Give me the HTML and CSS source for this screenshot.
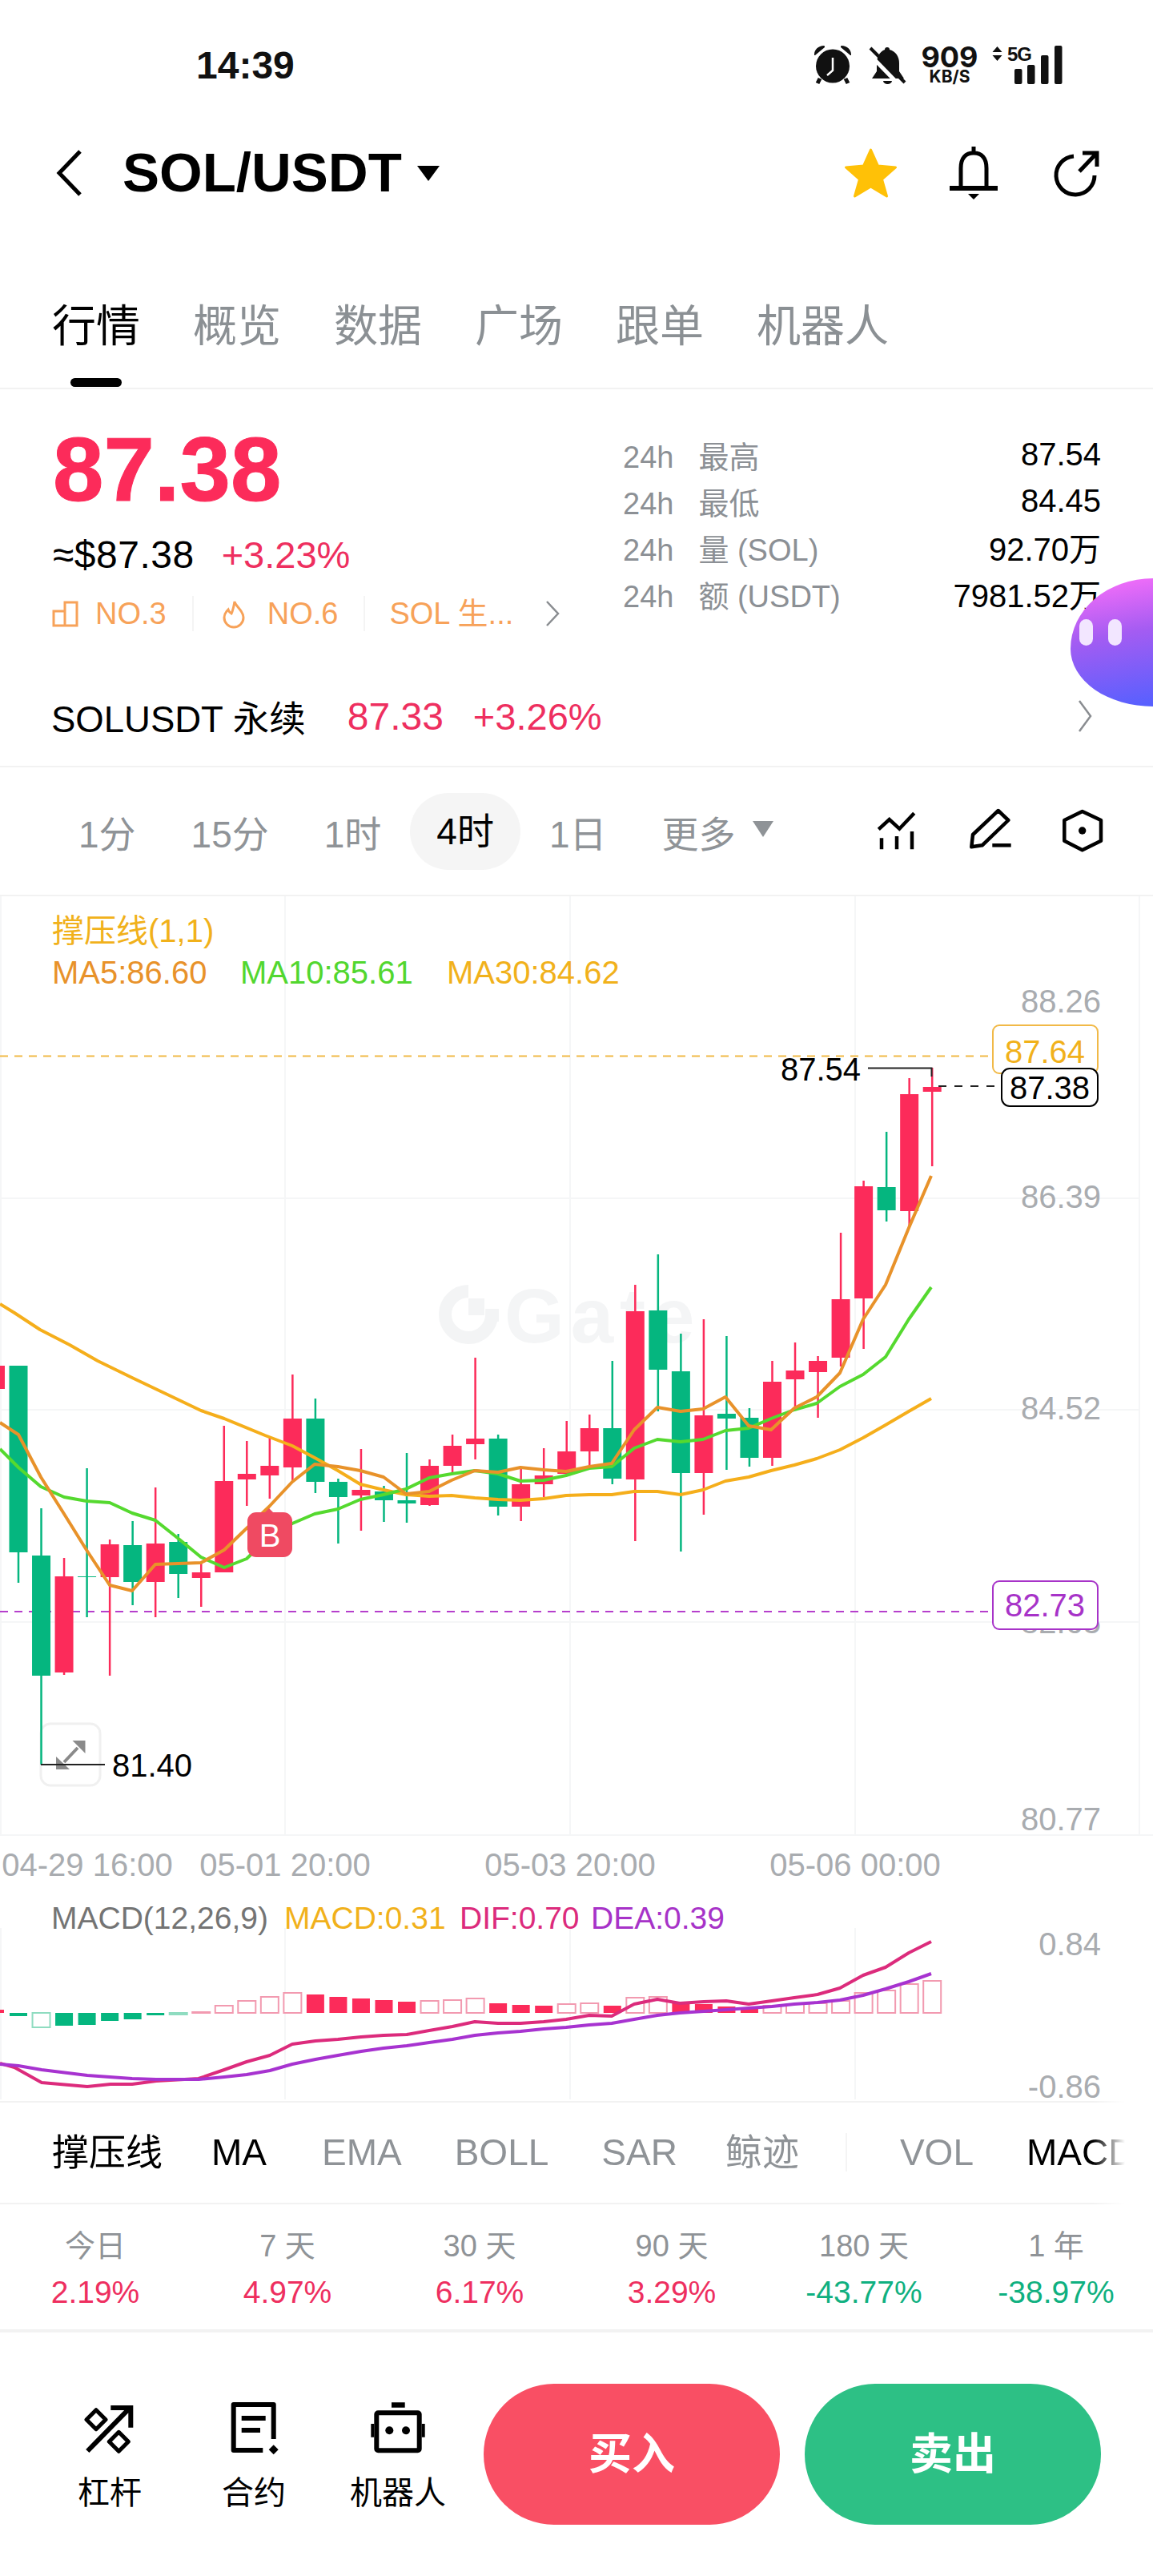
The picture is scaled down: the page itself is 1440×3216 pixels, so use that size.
FILE: index.html
```html
<!DOCTYPE html>
<html lang="zh-CN">
<head>
    <meta charset="UTF-8">
    <meta name="viewport" content="width=device-width, initial-scale=1.0">
    <title>SOL/USDT</title>
    <link rel="stylesheet" href="styles.css">
</head>
<body>
    <div class="status-bar">
        <span class="status-time">14:39</span>
        <div class="status-icons">
            <svg class="icon-alarm" viewBox="0 0 48 50">
                <path d="M1 12C1 6 6 1 13 1c1 0 1 1 1 2L2 13c-1 0-1 0-1-1zM47 12C47 6 42 1 35 1c-1 0-1 1-1 2l12 10c1 0 1 0 1-1z" fill="#111"/>
                <circle cx="24" cy="26.5" r="21" fill="#111"/>
                <path d="M8 42l-3 6M40 42l3 6" fill="none" stroke="#111" stroke-width="5"/>
                <path d="M24 16v16l-7 6" fill="none" stroke="#fff" stroke-width="2.5"/>
            </svg>
            <svg class="icon-mute" viewBox="0 0 46 47">
                <path d="M22 1c2 0 3 1 3 3 8 2 12 9 12 17v10l6 9H3l6-9V21c0-8 4-15 10-17 0-2 1-3 3-3zM17 43h11a5.5 4 0 0 1-11 0z" fill="#111"/>
                <path d="M-2 8l39 40" stroke="#fff" stroke-width="5"/>
                <path d="M1 2l43 43" stroke="#111" stroke-width="4"/>
            </svg>
            <div class="net-speed">
                <span class="net-value">909</span>
                <span class="net-unit">KB/S</span>
            </div>
            <svg class="icon-signal" viewBox="0 0 88 50">
                <path d="M6.5 2l6 7H.5zM6.5 20l6-7H.5z" fill="#111"/>
                <text class="signal-text" x="19" y="20">5G</text>
                <rect x="28" y="30" width="9.5" height="19" rx="2" fill="#111"/>
                <rect x="44" y="25" width="9.5" height="24" rx="2" fill="#111"/>
                <rect x="61" y="13" width="9.5" height="36" rx="2" fill="#111"/>
                <rect x="78" y="1" width="9.5" height="48" rx="2" fill="#111"/>
            </svg>
        </div>
    </div>

    <div class="pair-header">
        <svg class="icon-back" viewBox="0 0 36 60"><path d="M32 3L6 30l26 27" fill="none" stroke="#000" stroke-width="5"/></svg>
        <h1 class="pair-name">SOL/USDT</h1>
        <span class="caret caret-dark"></span>
        <div class="pair-actions">
            <svg class="icon-star" viewBox="0 0 69 64"><path d="M34.5 3l9 20 22 2-17 15 6 21-20-12-20 12 6-21-17-15 22-2z" fill="#ffc107" stroke="#ffc107" stroke-width="3" stroke-linejoin="round"/></svg>
            <svg class="icon-bell" viewBox="0 0 62 66">
                <path d="M15 51V27C15 14 21 8 31 8s16 6 16 19v24M31 0v8" fill="none" stroke="#000" stroke-width="5"/>
                <path d="M1 49h60v6H1zM24 59h14l-7 7z" fill="#000"/>
            </svg>
            <svg class="icon-share" viewBox="0 0 60 58">
                <path d="M26 8A24 24 0 1 0 52 32" fill="none" stroke="#000" stroke-width="5"/>
                <path d="M33 27L54 5M37 4h18v17" fill="none" stroke="#000" stroke-width="5"/>
            </svg>
        </div>
    </div>

    <div class="page-tabs">
        <span class="page-tab active">行情</span>
        <span class="page-tab">概览</span>
        <span class="page-tab">数据</span>
        <span class="page-tab">广场</span>
        <span class="page-tab">跟单</span>
        <span class="page-tab">机器人</span>
    </div>

    <section class="quote">
        <div class="quote-main">
            <div class="quote-left">
                <div class="last-price">87.38</div>
                <div class="fiat-row">
                    <span class="fiat-price">≈$87.38</span>
                    <span class="up-text fiat-change">+3.23%</span>
                </div>
                <div class="rank-row">
                    <svg class="icon-rank" viewBox="0 0 32 32"><path d="M1 13h14v18H1zM15 2h15v29H15z" fill="none" stroke="#f7a259" stroke-width="3"/></svg>
                    <span class="rank-text">NO.3</span>
                    <span class="rank-sep"></span>
                    <svg class="icon-flame" viewBox="0 0 28 34"><path d="M15 2c1 6 11 11 11 20a12 12 0 0 1-24 0c0-5 3-8 5-10 1 3 2 4 4 5 2-4 3-9 4-15z" fill="none" stroke="#f7a259" stroke-width="3"/></svg>
                    <span class="rank-text">NO.6</span>
                    <span class="rank-sep"></span>
                    <span class="rank-text rank-topic">SOL 生...</span>
                    <svg class="icon-more" viewBox="0 0 18 34"><path d="M2 2l14 15L2 32" fill="none" stroke="#8a8d91" stroke-width="2.5"/></svg>
                </div>
            </div>
            <dl class="stats">
                <div class="stat-row"><dt><span class="stat-period">24h</span>最高</dt><dd>87.54</dd></div>
                <div class="stat-row"><dt><span class="stat-period">24h</span>最低</dt><dd>84.45</dd></div>
                <div class="stat-row"><dt><span class="stat-period">24h</span>量 (SOL)</dt><dd>92.70万</dd></div>
                <div class="stat-row"><dt><span class="stat-period">24h</span>额 (USDT)</dt><dd>7981.52万</dd></div>
            </dl>
        </div>
        <div class="perp-row">
            <span class="perp-name">SOLUSDT 永续</span>
            <span class="perp-price up-text">87.33</span>
            <span class="perp-change up-text">+3.26%</span>
            <svg class="icon-perp-more" viewBox="0 0 18 42"><path d="M2 2l14 19L2 40" fill="none" stroke="#8a8d91" stroke-width="2.5"/></svg>
        </div>
        <div class="assistant">
            <span class="assistant-eye"></span>
            <span class="assistant-eye"></span>
        </div>
    </section>

    <div class="interval-bar">
        <span class="interval">1分</span>
        <span class="interval">15分</span>
        <span class="interval">1时</span>
        <span class="interval active">4时</span>
        <span class="interval">1日</span>
        <span class="interval">更多</span>
        <span class="caret caret-grey"></span>
        <div class="interval-tools">
            <svg class="tool-icon tool-chart" viewBox="0 0 48 56">
                <path d="M1.3 25.3L14.7 13l12.6 11.7L45.7 5.3" fill="none" stroke="#000" stroke-width="4.5"/>
                <path d="M5 36.3v14M24 34v16.3M43 28v22.3" fill="none" stroke="#000" stroke-width="4.5"/>
            </svg>
            <svg class="tool-icon tool-pencil" viewBox="0 0 54 56">
                <path d="M36.7 2L49.3 14 16.7 45.3 3.3 47.3 5 32z" fill="none" stroke="#000" stroke-width="4.5" stroke-linejoin="round"/>
                <path d="M29.3 45.3H52.7" fill="none" stroke="#000" stroke-width="4.5"/>
            </svg>
            <svg class="tool-icon tool-hex" viewBox="0 0 52 56">
                <path d="M25.7 3L49 14v25.7L25.7 51.3 3.3 39.7V14z" fill="none" stroke="#000" stroke-width="4.5" stroke-linejoin="round"/>
                <circle cx="25.7" cy="27" r="4.7" fill="#000"/>
            </svg>
        </div>
    </div>

    <svg class="kline" viewBox="0 1120 1440 1240">
        <g class="grid-lines">
            <path d="M1 1120V2292M356 1120V2292M712 1120V2292M1068 1120V2292M1423 1120V2292"/>
            <path d="M0 1497H1423M0 1761H1423M0 2026H1423M0 2292H1440"/>
        </g>
        <g class="watermark">
            <path d="M585 1613A29 29 0 1 0 614 1643H623" fill="none" stroke="#f3f4f5" stroke-width="16"/>
            <rect x="585" y="1622" width="20" height="21" fill="#f3f4f5"/>
            <text class="watermark-text" x="630" y="1677">Gate</text>
        </g>

        <text class="legend legend-sr" x="65" y="1177">撑压线(1,1)</text>
        <text class="legend legend-ma5" x="65" y="1229">MA5:86.60</text>
        <text class="legend legend-ma10" x="300" y="1229">MA10:85.61</text>
        <text class="legend legend-ma30" x="558" y="1229">MA30:84.62</text>

        <path class="dash dash-sr" d="M0 1319.5H1240"/>
        <path class="dash dash-res" d="M0 2013H1240"/>

        <text class="axis-label" x="1375" y="1265">88.26</text>
        <text class="axis-label" x="1375" y="1509">86.39</text>
        <text class="axis-label" x="1375" y="1773">84.52</text>
        <text class="axis-label" x="1375" y="2040">82.65</text>
        <text class="axis-label" x="1375" y="2286">80.77</text>

        <rect class="expand-btn" x="51" y="2153" width="74" height="77" rx="12"/>
        <path d="M106.5 2174v16L90.500 2174zM70 2210v-16l17 16z" fill="#8a8a8a"/>
        <path d="M97 2183L80 2201" fill="none" stroke="#8a8a8a" stroke-width="4"/>

        <g id="candles"></g>
        <g id="maLines"></g>

        <path class="mark-line" d="M51 2204H131"/>
        <text class="mark-label" x="140" y="2219">81.40</text>
        <path class="mark-line" d="M1084 1334.5H1163.5V1345"/>
        <text class="mark-label" x="975" y="1350">87.54</text>

        <g class="buy-marker">
            <path d="M329 1891l7-7 7 7z" fill="#ef4a62"/>
            <rect x="309" y="1889" width="56" height="56" rx="11" fill="#ef4a62"/>
            <text class="buy-marker-text" x="337" y="1932">B</text>
        </g>

        <rect class="price-box box-sr" x="1240" y="1281" width="131" height="60" rx="8"/>
        <text class="box-text text-sr" x="1305" y="1328">87.64</text>
        <path class="dash dash-last" d="M1172 1357H1245"/>
        <rect class="price-box box-last" x="1251" y="1335" width="120" height="47" rx="10"/>
        <text class="box-text text-last" x="1311" y="1373">87.38</text>
        <rect class="price-box box-res" x="1240" y="1975" width="131" height="60" rx="8"/>
        <text class="box-text text-res" x="1305" y="2019">82.73</text>

        <text class="axis-time" x="109" y="2343">04-29 16:00</text>
        <text class="axis-time" x="356" y="2343">05-01 20:00</text>
        <text class="axis-time" x="712" y="2343">05-03 20:00</text>
        <text class="axis-time" x="1068" y="2343">05-06 00:00</text>
    </svg>

    <svg class="macd" viewBox="0 2360 1440 264">
        <g class="grid-lines">
            <path d="M1 2408V2622M356 2408V2622M712 2408V2622M1068 2408V2622"/>
        </g>
        <text class="legend-small legend-macd" x="64" y="2409">MACD(12,26,9)</text>
        <text class="legend-small legend-ma30" x="355" y="2409">MACD:0.31</text>
        <text class="legend-small legend-dif" x="574" y="2409">DIF:0.70</text>
        <text class="legend-small legend-dea" x="738" y="2409">DEA:0.39</text>
        <text class="axis-label" x="1375" y="2442">0.84</text>
        <text class="axis-label" x="1375" y="2620">-0.86</text>
        <g id="macdBars"></g>
        <g id="macdLines"></g>
    </svg>

    <div class="indicator-bar">
        <span class="indicator on">撑压线</span>
        <span class="indicator on">MA</span>
        <span class="indicator">EMA</span>
        <span class="indicator">BOLL</span>
        <span class="indicator">SAR</span>
        <span class="indicator">鲸迹</span>
        <span class="indicator-sep"></span>
        <span class="indicator">VOL</span>
        <span class="indicator on">MACD</span>
    </div>

    <div class="returns">
        <div class="return-col"><span class="return-label">今日</span><span class="up-text">2.19%</span></div>
        <div class="return-col"><span class="return-label">7 天</span><span class="up-text">4.97%</span></div>
        <div class="return-col"><span class="return-label">30 天</span><span class="up-text">6.17%</span></div>
        <div class="return-col"><span class="return-label">90 天</span><span class="up-text">3.29%</span></div>
        <div class="return-col"><span class="return-label">180 天</span><span class="down-text">-43.77%</span></div>
        <div class="return-col"><span class="return-label">1 年</span><span class="down-text">-38.97%</span></div>
    </div>

    <div class="trade-bar">
        <div class="trade-link">
            <svg class="trade-icon" viewBox="0 0 66 66">
                <path d="M5.300 62L57.700 8.700M34.300 8h25v24.700" fill="none" stroke="#000" stroke-width="6"/>
                <path d="M16 10.700l12 12-12 12-12-12zM44.300 38.300l12 12-12 12-12-12z" fill="none" stroke="#000" stroke-width="5" stroke-linejoin="round"/>
            </svg>
            <span>杠杆</span>
        </div>
        <div class="trade-link">
            <svg class="trade-icon" viewBox="0 0 66 66">
                <path d="M57.700 47V4H7.700v57h36.600" fill="none" stroke="#000" stroke-width="6" stroke-linejoin="round"/>
                <path d="M17.700 18h30v6h-30zM17.700 33h23.300v6H17.700zM57.700 54.300l6 6-6 6-6-6z" fill="#000"/>
            </svg>
            <span>合约</span>
        </div>
        <div class="trade-link">
            <svg class="trade-icon" viewBox="0 0 72 66">
                <path d="M28 1.300h16.700v6.400H28zM2.300 28h4v16.700h-4zM65.700 28h4v16.700h-4z" fill="#000"/>
                <rect x="9.300" y="14.300" width="53.400" height="47" rx="2" fill="none" stroke="#000" stroke-width="6"/>
                <circle cx="25.300" cy="36.300" r="5" fill="#000"/>
                <circle cx="46" cy="36.300" r="5" fill="#000"/>
            </svg>
            <span>机器人</span>
        </div>
        <div class="trade-btn trade-buy">买入</div>
        <div class="trade-btn trade-sell">卖出</div>
    </div>

    <script src="chart.js"></script>
</body>
</html>
```

FILE: styles.css
```css
* {
    box-sizing: border-box;
}
body {
    margin: 0;
    width: 1440px;
    background-color: #fff;
    color: #000;
    font-family: "Liberation Sans", "Noto Sans CJK SC", sans-serif;
    overflow-x: hidden;
}
svg {
    display: block;
    overflow: visible;
}

/* status bar */
.status-bar {
    height: 162px;
    padding: 0 113px 0 245px;
    display: flex;
    justify-content: space-between;
    align-items: center;
}
.status-time {
    font-size: 48px;
    font-weight: bold;
    color: #111;
}
.status-icons {
    display: flex;
    align-items: center;
}
.icon-alarm {
    width: 48px;
    height: 50px;
    margin-right: 22px;
}
.icon-mute {
    width: 46px;
    height: 47px;
    margin-right: 18px;
}
.net-speed {
    width: 72px;
    display: flex;
    flex-direction: column;
    align-items: center;
    font-family: Inter, "Liberation Sans", sans-serif;
    font-weight: bold;
    color: #111;
}
.net-value {
    font-size: 36px;
    line-height: 29px;
}
.net-unit {
    font-size: 21px;
    line-height: 20px;
}
.icon-signal {
    width: 88px;
    height: 50px;
    margin-left: 17px;
}
.signal-text {
    font-size: 24px;
    font-weight: bold;
    letter-spacing: -1px;
    fill: #111;
}

/* pair header */
.pair-header {
    height: 108px;
    padding: 0 65px 0 68px;
    display: flex;
    align-items: center;
}
.icon-back {
    width: 36px;
    height: 60px;
}
.pair-name {
    margin: 0 0 0 49px;
    font-size: 69px;
    font-weight: bold;
    line-height: 80px;
}
.caret {
    width: 0;
    height: 0;
    border-left: 14px solid transparent;
    border-right: 14px solid transparent;
}
.caret-dark {
    margin-left: 19px;
    border-top: 19px solid #000;
}
.pair-actions {
    margin-left: auto;
    display: flex;
    align-items: center;
}
.icon-star {
    width: 69px;
    height: 64px;
}
.icon-bell {
    width: 62px;
    height: 66px;
    margin-left: 63px;
}
.icon-share {
    width: 60px;
    height: 58px;
    margin-left: 68px;
}

/* page tabs */
.page-tabs {
    height: 216px;
    padding: 110px 0 0 65px;
    display: flex;
    gap: 66px;
    align-items: flex-start;
    border-bottom: 2px solid #f2f2f2;
}
.page-tab {
    position: relative;
    font-size: 55px;
    line-height: 54px;
    color: #8b9094;
}
.page-tab.active {
    color: #000;
}
.page-tab.active::after {
    content: "";
    position: absolute;
    left: 23px;
    top: 92px;
    width: 64px;
    height: 11px;
    border-radius: 6px;
    background-color: #000;
}

/* quote */
.quote {
    position: relative;
    height: 472px;
    border-bottom: 2px solid #f2f2f2;
}
.quote-main {
    height: 346px;
    padding-left: 66px;
    display: flex;
}
.quote-left {
    width: 712px;
    padding-top: 40px;
}
.last-price {
    font-size: 114px;
    font-weight: bold;
    line-height: 120px;
    color: #fc2b5a;
    -webkit-text-stroke: 1px #fc2b5a;
}
.fiat-row {
    margin-top: 22px;
    display: flex;
    gap: 34px;
    line-height: 50px;
    font-size: 48px;
}
.fiat-price {
    letter-spacing: 0.5px;
}
.fiat-change {
    font-size: 47px;
}
.up-text {
    color: #ee2f5f;
}
.down-text {
    color: #0fb080;
}
.rank-row {
    margin-top: 28px;
    height: 40px;
    display: flex;
    align-items: center;
    font-size: 38px;
    line-height: 40px;
    color: #f7a259;
}
.icon-rank {
    width: 32px;
    height: 32px;
    margin-right: 21px;
}
.icon-flame {
    width: 28px;
    height: 34px;
    margin-right: 28px;
}
.rank-sep {
    width: 2px;
    height: 44px;
    margin: 0 36px 0 32px;
    background-color: #f4f4f4;
}
.rank-topic {
    margin-left: -6px;
}
.icon-more {
    width: 18px;
    height: 34px;
    margin-left: 40px;
}
.stats {
    margin: 0;
    padding: 52px 65px 0 0;
    flex: 1;
}
.stat-row {
    height: 58px;
    display: flex;
    justify-content: space-between;
    align-items: center;
    font-size: 40px;
}
.stat-row dt {
    color: #8c9095;
    font-size: 38px;
}
.stat-period {
    margin-right: 31px;
}
.stat-row dd {
    margin: 0;
    white-space: nowrap;
}
.perp-row {
    height: 124px;
    padding: 0 76px 0 64px;
    display: flex;
    align-items: center;
}
.perp-name {
    font-size: 45.5px;
}
.perp-price {
    margin: 0 37px 0 52px;
    font-size: 48px;
}
.perp-change {
    font-size: 47px;
}
.icon-perp-more {
    width: 18px;
    height: 42px;
    margin-left: auto;
}
.assistant {
    position: absolute;
    top: 236px;
    right: 0;
    width: 103px;
    height: 160px;
    padding: 51px 0 0 11px;
    display: flex;
    gap: 19px;
    border-radius: 100% 0 0 100% / 55% 0 6px 45%;
    background: linear-gradient(170deg, #ff70fa 0%, #a45cf2 45%, #5560ff 100%);
}
.assistant-eye {
    width: 17px;
    height: 33px;
    border-radius: 9px;
    background-color: #f2e6ff;
}

/* interval bar */
.interval-bar {
    height: 161px;
    padding: 1px 62px 0 98px;
    display: flex;
    align-items: center;
    gap: 69px;
    font-size: 46px;
    color: #8f9397;
    border-bottom: 2px solid #f2f2f2;
}
.interval.active {
    margin: 0 -33px;
    padding: 0 33px;
    height: 96px;
    line-height: 96px;
    border-radius: 48px;
    background-color: #f5f5f5;
    color: #000;
}
.caret-grey {
    margin-left: -48px;
    margin-top: -6px;
    border-left-width: 13px;
    border-right-width: 13px;
    border-top: 20px solid #8f9397;
}
.interval-tools {
    margin-left: auto;
    display: flex;
    align-items: center;
}
.tool-icon {
    height: 56px;
}
.tool-chart {
    width: 48px;
}
.tool-pencil {
    width: 54px;
    margin: 0 62px 0 66px;
}
.tool-hex {
    width: 52px;
}

/* chart svg */
.kline {
    width: 1440px;
    height: 1240px;
}
.macd {
    width: 1440px;
    height: 264px;
}
.grid-lines path {
    fill: none;
    stroke: #f5f6f7;
    stroke-width: 2;
}
.watermark-text {
    font-size: 96px;
    font-weight: bold;
    letter-spacing: 8px;
    fill: #f4f5f6;
}
.legend {
    font-size: 40px;
}
.legend-small {
    font-size: 39px;
}
.legend-sr,
.legend-ma30 {
    fill: #f1b11b;
}
.legend-ma5 {
    fill: #e8922a;
}
.legend-ma10 {
    fill: #52d72f;
}
.legend-macd {
    fill: #747474;
}
.legend-dif {
    fill: #dc2b7c;
}
.legend-dea {
    fill: #a733c8;
}
.axis-label {
    font-size: 40px;
    fill: #a9acb0;
    text-anchor: end;
}
.axis-time {
    font-size: 40px;
    fill: #a9acb0;
    text-anchor: middle;
}
.dash {
    fill: none;
    stroke-width: 2;
}
.dash-sr {
    stroke: #f1b947;
    stroke-dasharray: 10 8;
}
.dash-res {
    stroke: #b63fcc;
    stroke-dasharray: 10 8;
}
.dash-last {
    stroke: #222;
    stroke-dasharray: 10 10;
}
.expand-btn {
    fill: #fff;
    stroke: #f0f0f0;
    stroke-width: 3;
}
.mark-line {
    fill: none;
    stroke: #222;
    stroke-width: 2;
}
.mark-label {
    font-size: 40px;
    fill: #000;
}
.buy-marker-text {
    font-size: 40px;
    fill: #fff;
    text-anchor: middle;
}
.price-box {
    fill: #fff;
    stroke-width: 2;
}
.box-sr {
    stroke: #f1b947;
}
.box-last {
    stroke: #000;
}
.box-res {
    stroke: #a733c8;
}
.box-text {
    font-size: 40px;
    text-anchor: middle;
}
.text-sr {
    fill: #f1b11b;
}
.text-last {
    fill: #000;
}
.text-res {
    fill: #a733c8;
}

/* indicator bar */
.indicator-bar {
    height: 129px;
    padding: 0 0 2px 65px;
    display: flex;
    align-items: center;
    gap: 66px;
    font-size: 46px;
    line-height: 50px;
    color: #8f9397;
    white-space: nowrap;
    overflow: hidden;
    border-top: 2px solid #f2f2f2;
    border-bottom: 2px solid #f2f2f2;
    -webkit-mask-image: linear-gradient(90deg, #000 1365px, transparent 1405px);
    mask-image: linear-gradient(90deg, #000 1365px, transparent 1405px);
}
.indicator.on {
    color: #000;
}
.indicator:nth-child(1) {
    margin-right: -5px;
}
.indicator:nth-child(2) {
    margin-right: 3px;
}
.indicator:nth-child(5) {
    margin-right: -6px;
}
.indicator-sep {
    flex: none;
    width: 2px;
    height: 48px;
    margin: 0 0 0 -8px;
    background-color: #f4f4f4;
}

/* period returns */
.returns {
    height: 160px;
    padding-top: 30px;
    display: grid;
    grid-template-columns: repeat(6, 240px);
    margin-left: -1px;
    border-bottom: 4px solid #f2f2f2;
    font-size: 39px;
}
.return-col {
    display: flex;
    flex-direction: column;
    align-items: center;
    gap: 14px;
    line-height: 44px;
}
.return-label {
    color: #8f9397;
    font-size: 38px;
}

/* bottom trade bar */
.trade-bar {
    height: 304px;
    padding: 64px 65px 0 47px;
    display: flex;
    align-items: flex-start;
}
.trade-link {
    width: 180px;
    padding-top: 22px;
    display: flex;
    flex-direction: column;
    align-items: center;
    gap: 23px;
    font-size: 40px;
    line-height: 50px;
}
.trade-icon {
    height: 66px;
}
.trade-btn {
    width: 370px;
    height: 176px;
    border-radius: 88px;
    text-align: center;
    line-height: 176px;
    font-size: 54px;
    font-weight: bold;
    color: #fff;
}
.trade-buy {
    margin-left: 17px;
    background-color: #f94f64;
}
.trade-sell {
    margin-left: 31px;
    background-color: #2dc085;
}
```

FILE: chart.js
```js
// candles from index -1 (cut off by the left edge) up to 40
// [wick top, body top, body bottom, wick bottom, colour]
const candles = [
    [1706, 1706, 1735, 1735, 'r'],
    [1706, 1706, 1939, 1977, 'g'],
    [1884, 1943, 2093, 2204, 'g'],
    [1946, 1969, 2089, 2092, 'r'],
    [1834, 1969, 1970, 2020, 'g'],
    [1923, 1929, 1970, 2093, 'r'],
    [1900, 1930, 1976, 2005, 'g'],
    [1858, 1928, 1976, 2020, 'r'],
    [1916, 1926, 1966, 1996, 'g'],
    [1951, 1964, 1971, 2007, 'r'],
    [1781, 1850, 1964, 1964, 'r'],
    [1800, 1841, 1848, 1881, 'r'],
    [1794, 1831, 1843, 1872, 'r'],
    [1717, 1772, 1833, 1851, 'r'],
    [1747, 1772, 1851, 1865, 'g'],
    [1847, 1851, 1870, 1928, 'g'],
    [1810, 1861, 1868, 1912, 'r'],
    [1856, 1863, 1874, 1901, 'g'],
    [1815, 1874, 1878, 1902, 'g'],
    [1823, 1831, 1880, 1881, 'r'],
    [1792, 1806, 1831, 1841, 'r'],
    [1696, 1797, 1804, 1823, 'r'],
    [1792, 1797, 1882, 1893, 'g'],
    [1835, 1854, 1882, 1900, 'r'],
    [1809, 1843, 1854, 1870, 'r'],
    [1775, 1813, 1841, 1843, 'r'],
    [1767, 1784, 1813, 1834, 'r'],
    [1700, 1784, 1847, 1854, 'g'],
    [1605, 1638, 1848, 1925, 'r'],
    [1567, 1637, 1711, 1763, 'g'],
    [1666, 1713, 1840, 1938, 'g'],
    [1648, 1768, 1840, 1892, 'r'],
    [1669, 1766, 1772, 1836, 'g'],
    [1759, 1771, 1821, 1832, 'g'],
    [1700, 1726, 1821, 1831, 'r'],
    [1677, 1712, 1723, 1757, 'r'],
    [1694, 1700, 1714, 1771, 'r'],
    [1540, 1623, 1696, 1707, 'r'],
    [1475, 1482, 1622, 1685, 'r'],
    [1414, 1483, 1512, 1526, 'g'],
    [1347, 1367, 1513, 1531, 'r'],
    [1334, 1358, 1364, 1457, 'r']
];

const ma30 = [[0, 1629], [18, 1640], [50, 1661], [87, 1680], [122, 1700], [165, 1721], [207, 1741], [251, 1762], [280, 1772], [331, 1793], [365, 1806], [395, 1822], [422, 1837], [450, 1854], [479, 1861], [507, 1867], [536, 1869], [564, 1868], [593, 1871], [622, 1873], [650, 1874], [679, 1872], [707, 1868], [736, 1867], [764, 1867], [792, 1863], [821, 1863], [850, 1867], [878, 1861], [906, 1850], [935, 1845], [963, 1837], [992, 1830], [1020, 1822], [1049, 1811], [1078, 1796], [1106, 1780], [1135, 1763], [1163, 1747]];
const ma10 = [[0, 1810], [23, 1833], [51, 1857], [80, 1870], [108, 1875], [137, 1877], [165, 1890], [194, 1899], [223, 1922], [251, 1945], [280, 1958], [308, 1947], [336, 1920], [365, 1903], [393, 1891], [422, 1885], [450, 1873], [479, 1867], [507, 1860], [536, 1846], [564, 1841], [593, 1837], [622, 1841], [650, 1850], [679, 1849], [707, 1843], [736, 1834], [764, 1832], [792, 1809], [821, 1798], [850, 1801], [878, 1798], [906, 1787], [935, 1784], [963, 1772], [992, 1761], [1020, 1753], [1049, 1732], [1078, 1717], [1106, 1695], [1135, 1648], [1163, 1608]];
const ma5 = [[0, 1777], [23, 1792], [51, 1845], [80, 1891], [108, 1936], [137, 1980], [165, 1987], [194, 1954], [251, 1952], [280, 1936], [308, 1909], [336, 1882], [365, 1851], [393, 1829], [422, 1832], [450, 1837], [479, 1845], [507, 1866], [536, 1863], [564, 1849], [593, 1837], [622, 1839], [650, 1833], [679, 1836], [707, 1838], [736, 1832], [764, 1828], [792, 1786], [821, 1758], [850, 1763], [878, 1760], [906, 1745], [935, 1781], [963, 1786], [992, 1759], [1020, 1745], [1049, 1715], [1078, 1648], [1106, 1605], [1135, 1534], [1163, 1469]];

// macd bars: [top or bottom y, solid?] for index 0 to 40, baseline 2514
const macdBars = [
    [2518, 1], [2532, 0], [2530, 1], [2529, 1], [2524, 1], [2522, 1], [2517, 1], [2516, 0],
    [2513, 0], [2505, 0], [2499, 0], [2494, 0], [2489, 0], [2491, 1], [2494, 1], [2496, 1],
    [2498, 1], [2500, 1], [2499, 0], [2498, 0], [2496, 0], [2502, 1], [2504, 1], [2505, 1],
    [2503, 0], [2502, 0], [2505, 1], [2495, 0], [2494, 0], [2500, 1], [2503, 1], [2506, 1],
    [2508, 1], [2505, 0], [2503, 0], [2502, 0], [2499, 0], [2489, 0], [2486, 0], [2478, 0], [2474, 0]
];

const difLine = [[0, 2577], [18, 2582], [52, 2601], [109, 2606], [138, 2603], [165, 2603], [195, 2599], [248, 2596], [280, 2585], [308, 2575], [337, 2567], [365, 2553], [394, 2549], [422, 2547], [451, 2544], [479, 2542], [508, 2541], [536, 2536], [565, 2531], [593, 2525], [622, 2527], [650, 2527], [679, 2525], [707, 2522], [736, 2517], [764, 2518], [792, 2503], [821, 2497], [849, 2502], [879, 2500], [907, 2499], [935, 2503], [964, 2499], [992, 2495], [1021, 2491], [1049, 2483], [1078, 2467], [1106, 2457], [1135, 2439], [1163, 2425]];
const deaLine = [[0, 2578], [23, 2580], [52, 2585], [109, 2592], [165, 2596], [195, 2597], [248, 2597], [280, 2594], [308, 2591], [337, 2586], [365, 2578], [394, 2572], [422, 2567], [451, 2562], [479, 2558], [508, 2555], [536, 2551], [565, 2547], [593, 2542], [622, 2539], [650, 2537], [679, 2534], [707, 2532], [736, 2529], [764, 2527], [792, 2522], [821, 2517], [849, 2514], [879, 2512], [907, 2510], [935, 2508], [964, 2506], [992, 2503], [1021, 2501], [1049, 2498], [1078, 2492], [1106, 2484], [1135, 2475], [1163, 2465]];

const SPACING = 28.53;
const COLORS = { r: '#fc2b5a', g: '#05b67f' };
const SVG_NS = 'http://www.w3.org/2000/svg';

function addShape(parent, tag, attrs) {
    const el = document.createElementNS(SVG_NS, tag);
    Object.keys(attrs).forEach(key => el.setAttribute(key, attrs[key]));
    parent.appendChild(el);
}

function drawCandles() {
    const group = document.getElementById('candles');
    candles.forEach((c, n) => {
        const x = 23 + SPACING * (n - 1);
        addShape(group, 'rect', { x: x - 1.25, y: c[0], width: 2.5, height: c[3] - c[0], fill: COLORS[c[4]] });
        addShape(group, 'rect', { x: x - 11.5, y: c[1], width: 23, height: c[2] - c[1], fill: COLORS[c[4]] });
    });
}

function drawLine(parent, points, color, width) {
    addShape(parent, 'polyline', {
        points: points.map(p => p.join(',')).join(' '),
        fill: 'none',
        stroke: color,
        'stroke-width': width,
        'stroke-linejoin': 'round'
    });
}

function drawMacdBars() {
    const group = document.getElementById('macdBars');
    const base = 2514;
    addShape(group, 'rect', { x: -17, y: 2510, width: 22, height: 4, fill: COLORS.r });
    macdBars.forEach((b, n) => {
        const x = 23 + SPACING * n - 11;
        const isDown = b[0] > base || n < 8;
        const top = Math.min(b[0], base);
        const height = Math.max(Math.abs(b[0] - base), 1);
        if (b[1]) {
            addShape(group, 'rect', { x: x, y: top, width: 22, height: height, fill: isDown ? COLORS.g : COLORS.r });
        } else {
            addShape(group, 'rect', { x: x, y: top, width: 22, height: height, fill: '#fff', stroke: isDown ? '#8fdcc0' : '#f29ab0', 'stroke-width': 2 });
        }
    });
}

drawCandles();
const maGroup = document.getElementById('maLines');
drawLine(maGroup, ma30, '#f5ae1b', 4);
drawLine(maGroup, ma10, '#55d92f', 4);
drawLine(maGroup, ma5, '#e8922a', 4);

drawMacdBars();
const macdGroup = document.getElementById('macdLines');
drawLine(macdGroup, difLine, '#dc2b7c', 4);
drawLine(macdGroup, deaLine, '#a733d0', 4);
```
